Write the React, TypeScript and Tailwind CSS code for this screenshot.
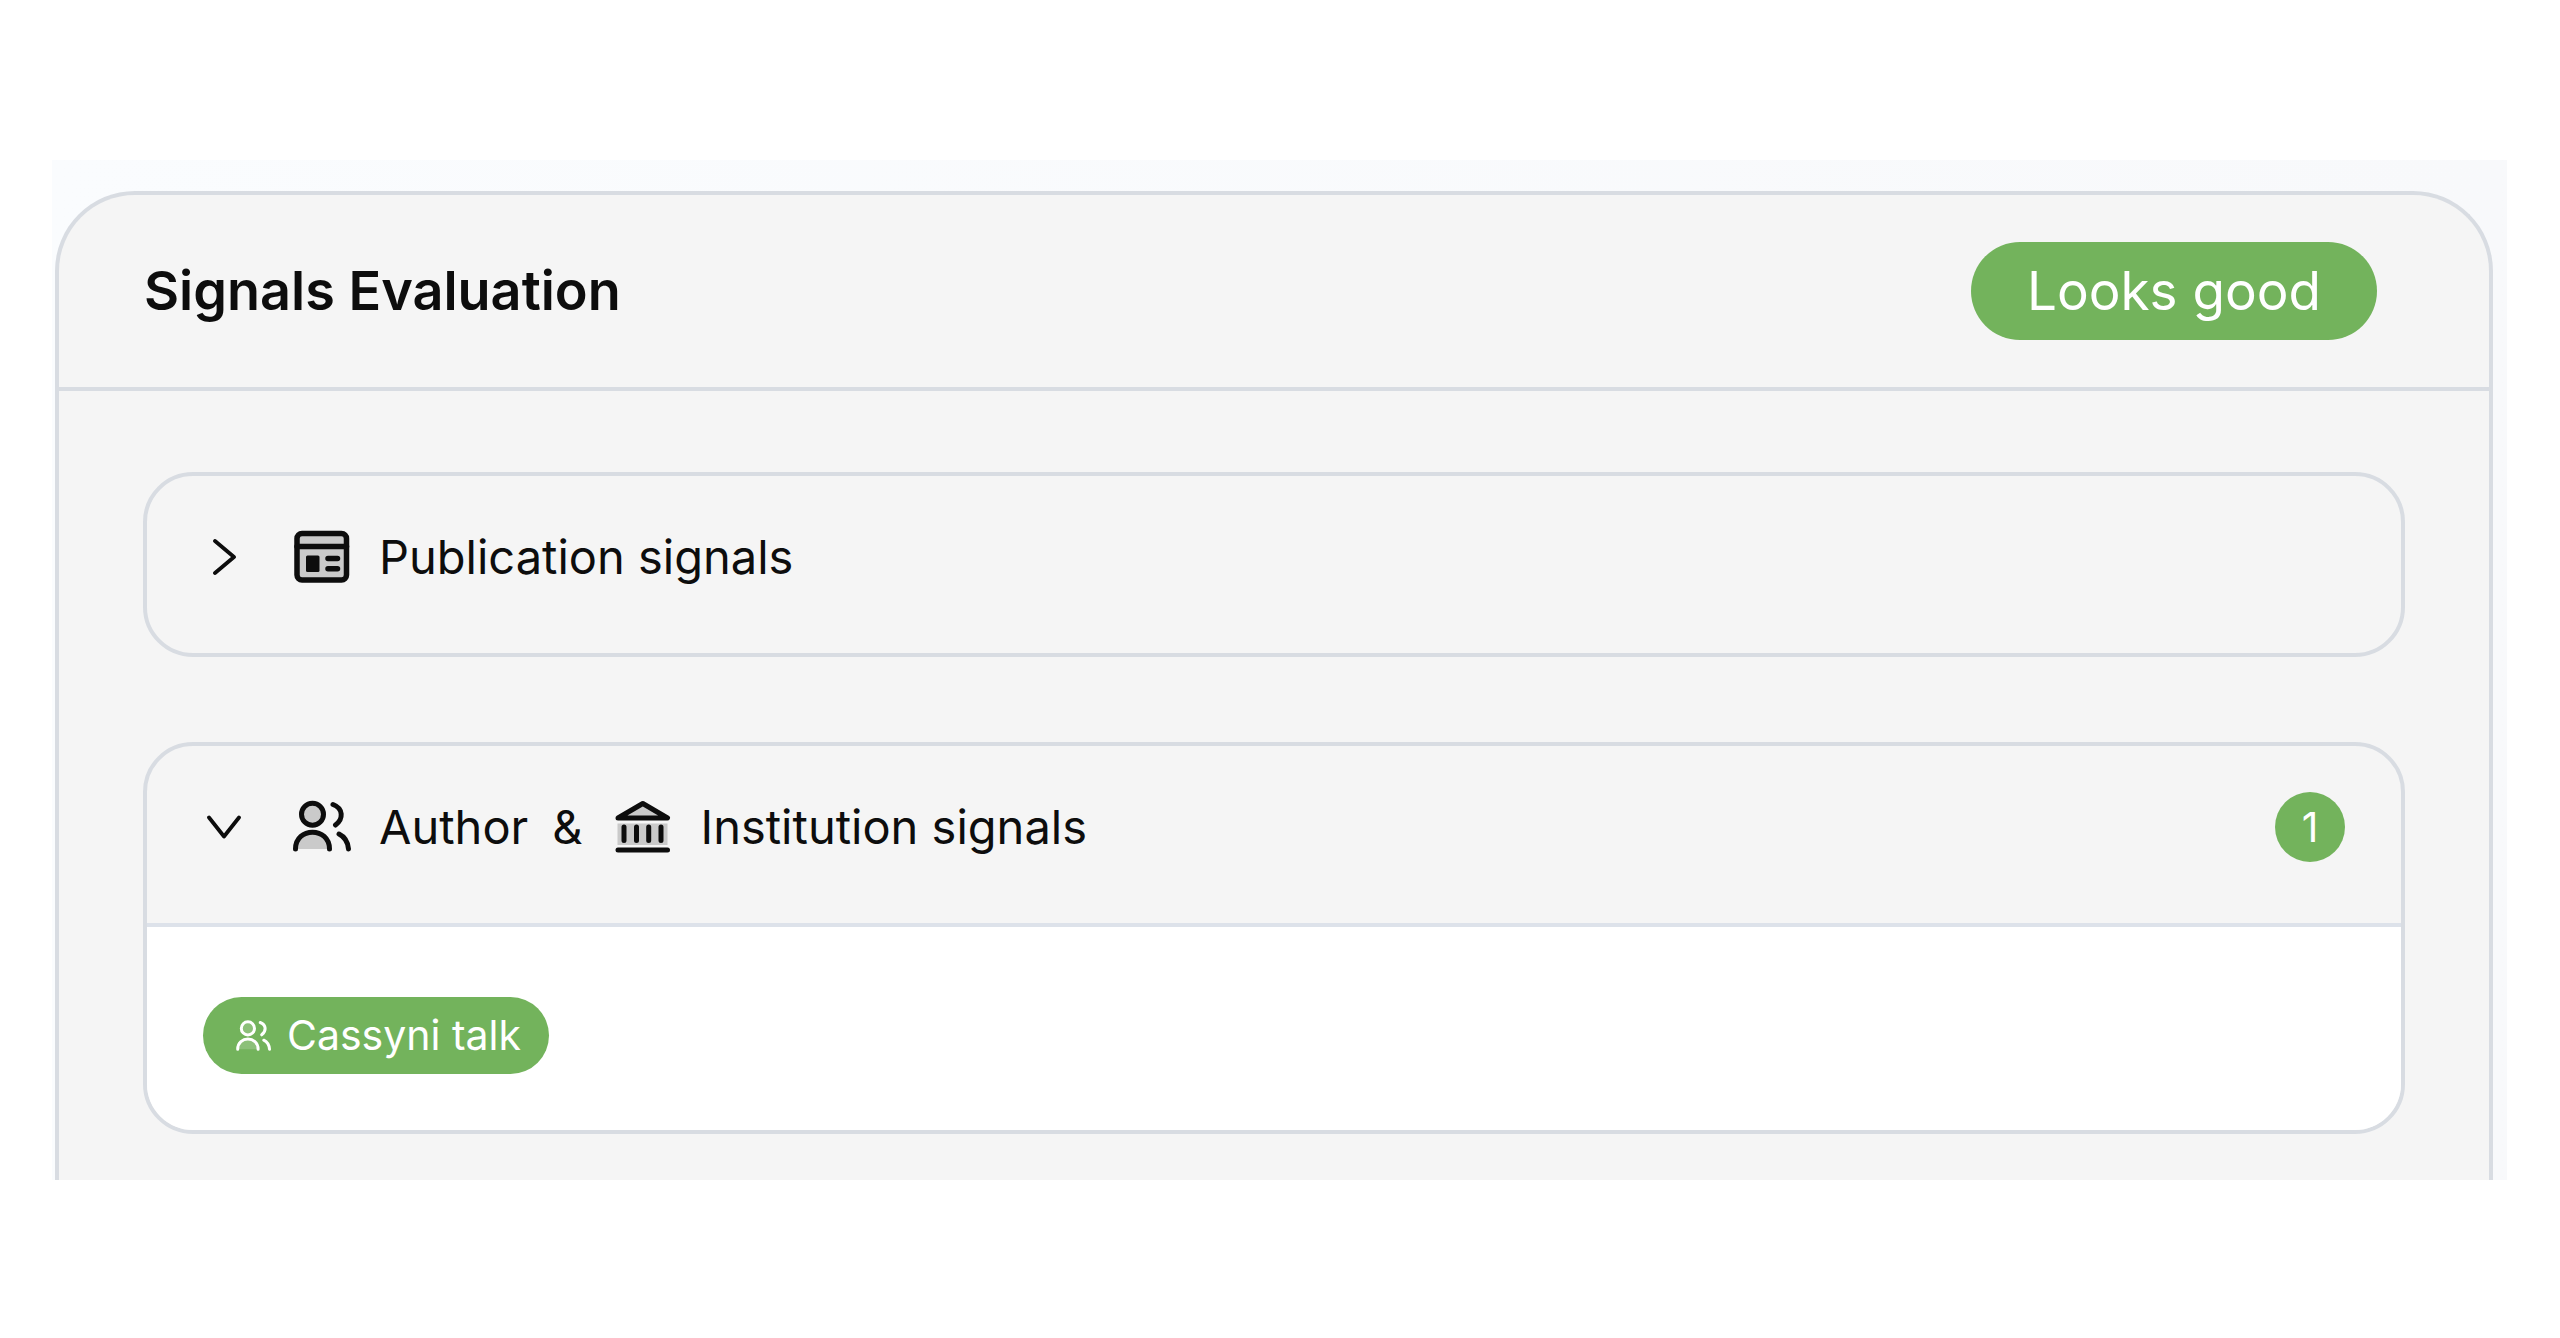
import React, { useState } from 'react';

interface IconProps {
  className?: string;
}

const ChevronIcon: React.FC<{ open: boolean }> = ({ open }) => (
  <svg viewBox="0 0 36 36" fill="none" stroke="currentColor" strokeWidth={3.8} strokeLinecap="round" strokeLinejoin="round" className="size-9 shrink-0" aria-hidden="true">
    {open ? <path d="M2 8.5 L17 27.5 L32 8.5" /> : <path d="M8 2 L27 18 L8 34" />}
  </svg>
);

const PublicationIcon: React.FC<IconProps> = ({ className }) => (
  <svg viewBox="0 0 60 60" fill="none" stroke="currentColor" strokeWidth={5.5} strokeLinecap="round" strokeLinejoin="round" className={className} aria-hidden="true">
    <rect x="6" y="6.5" width="49.5" height="46.5" rx="5" fill="currentColor" fillOpacity={0.18} />
    <path d="M6 19.5 H55.5" />
    <rect x="15" y="28.5" width="13.5" height="16.5" rx="1.5" fill="currentColor" stroke="none" />
    <path d="M37 31.5 H46.5 M37 41.8 H46.5" />
  </svg>
);

const UsersIcon: React.FC<IconProps> = ({ className }) => (
  <svg viewBox="0 0 60 60" fill="none" stroke="currentColor" strokeWidth={5} strokeLinecap="round" strokeLinejoin="round" className={className} aria-hidden="true">
    <circle cx="21.5" cy="17.3" r="11" fill="currentColor" fillOpacity={0.18} />
    <path d="M4.5 52 C4.5 29.5 38.5 29.5 38.5 52" fill="currentColor" fillOpacity={0.18} />
    <path d="M42 7.5 C52.5 11.5 52.5 22 44.5 28" />
    <path d="M48 37 C54 40 57 45.5 57.5 52" />
  </svg>
);

const InstitutionIcon: React.FC<IconProps> = ({ className }) => (
  <svg viewBox="0 0 60 60" fill="none" stroke="currentColor" strokeWidth={5} strokeLinecap="round" strokeLinejoin="round" className={className} aria-hidden="true">
    <rect x="4.5" y="26.5" width="50" height="21.5" fill="currentColor" fillOpacity={0.18} stroke="none" />
    <path d="M29.8 6.5 L54.5 21 H5 Z" fill="currentColor" fillOpacity={0.18} />
    <path d="M11 30 V43.5 M23.5 30 V43.5 M35.7 30 V43.5 M48 30 V43.5" />
    <path d="M5 53 H54.5" />
  </svg>
);

interface SignalPanelProps {
  title: React.ReactNode;
  count?: number;
  defaultOpen?: boolean;
  children?: React.ReactNode;
}

const SignalPanel: React.FC<SignalPanelProps> = ({ title, count, defaultOpen = false, children }) => {
  const [open, setOpen] = useState(defaultOpen);

  return (
    <section className="overflow-hidden rounded-[50px] border-4 border-[#d8dce2]">
      <button
        type="button"
        aria-expanded={open}
        onClick={() => setOpen(!open)}
        className="flex w-full items-center gap-12 pt-[41px] pr-14 pb-14 pl-[60px] text-left text-[47px] leading-[80px]"
      >
        <ChevronIcon open={open} />
        <span className="flex grow items-center">{title}</span>
        {count !== undefined && (
          <span className="flex size-[70px] items-center justify-center rounded-full bg-[#73b35c] text-[41px] text-white">
            {count}
          </span>
        )}
      </button>
      {open && children && (
        <div className="flex flex-wrap border-t-4 border-[#dde2ea] bg-white px-14 pt-[70px] pb-14">{children}</div>
      )}
    </section>
  );
};

const App: React.FC = () => {
  return (
    <main className="min-h-screen bg-white py-40 pr-[53px] pl-[52px] font-[Inter,sans-serif] text-[#0d0d0d]">
      <div className="bg-linear-to-r from-[#fafcfe] to-[#f8f9fb] pt-[31px] pr-3.5 pl-[3px]">
        <div className="rounded-t-[80px] border-4 border-b-0 border-[#d8dce2] bg-[#f5f5f5]">
          <header className="flex items-center justify-between border-b-4 border-[#d8dce2] py-[47px] pr-28 pl-[85px]">
            <h1 className="text-[54px] leading-[98px] font-semibold">Signals Evaluation</h1>
            <span className="rounded-full bg-[#73b35c] px-14 text-[53px] leading-[98px] text-white">Looks good</span>
          </header>

          <div className="flex flex-col gap-[85px] px-[84px] pt-[81px] pb-[46px]">
            <SignalPanel
              title={
                <>
                  <PublicationIcon className="mr-7 size-[60px]" />
                  Publication signals
                </>
              }
            />

            <SignalPanel
              defaultOpen
              count={1}
              title={
                <>
                  <UsersIcon className="mr-7 size-[60px]" />
                  Author
                  <span className="mr-[30px] ml-6">&amp;</span>
                  <InstitutionIcon className="mr-7 size-[60px]" />
                  Institution signals
                </>
              }
            >
              <span className="flex items-center gap-4 rounded-full bg-[#73b35c] pr-7 pl-8 text-[41px] leading-[77px] text-white">
                <UsersIcon className="size-9" />
                Cassyni talk
              </span>
            </SignalPanel>
          </div>
        </div>
      </div>
    </main>
  );
};

export default App;
